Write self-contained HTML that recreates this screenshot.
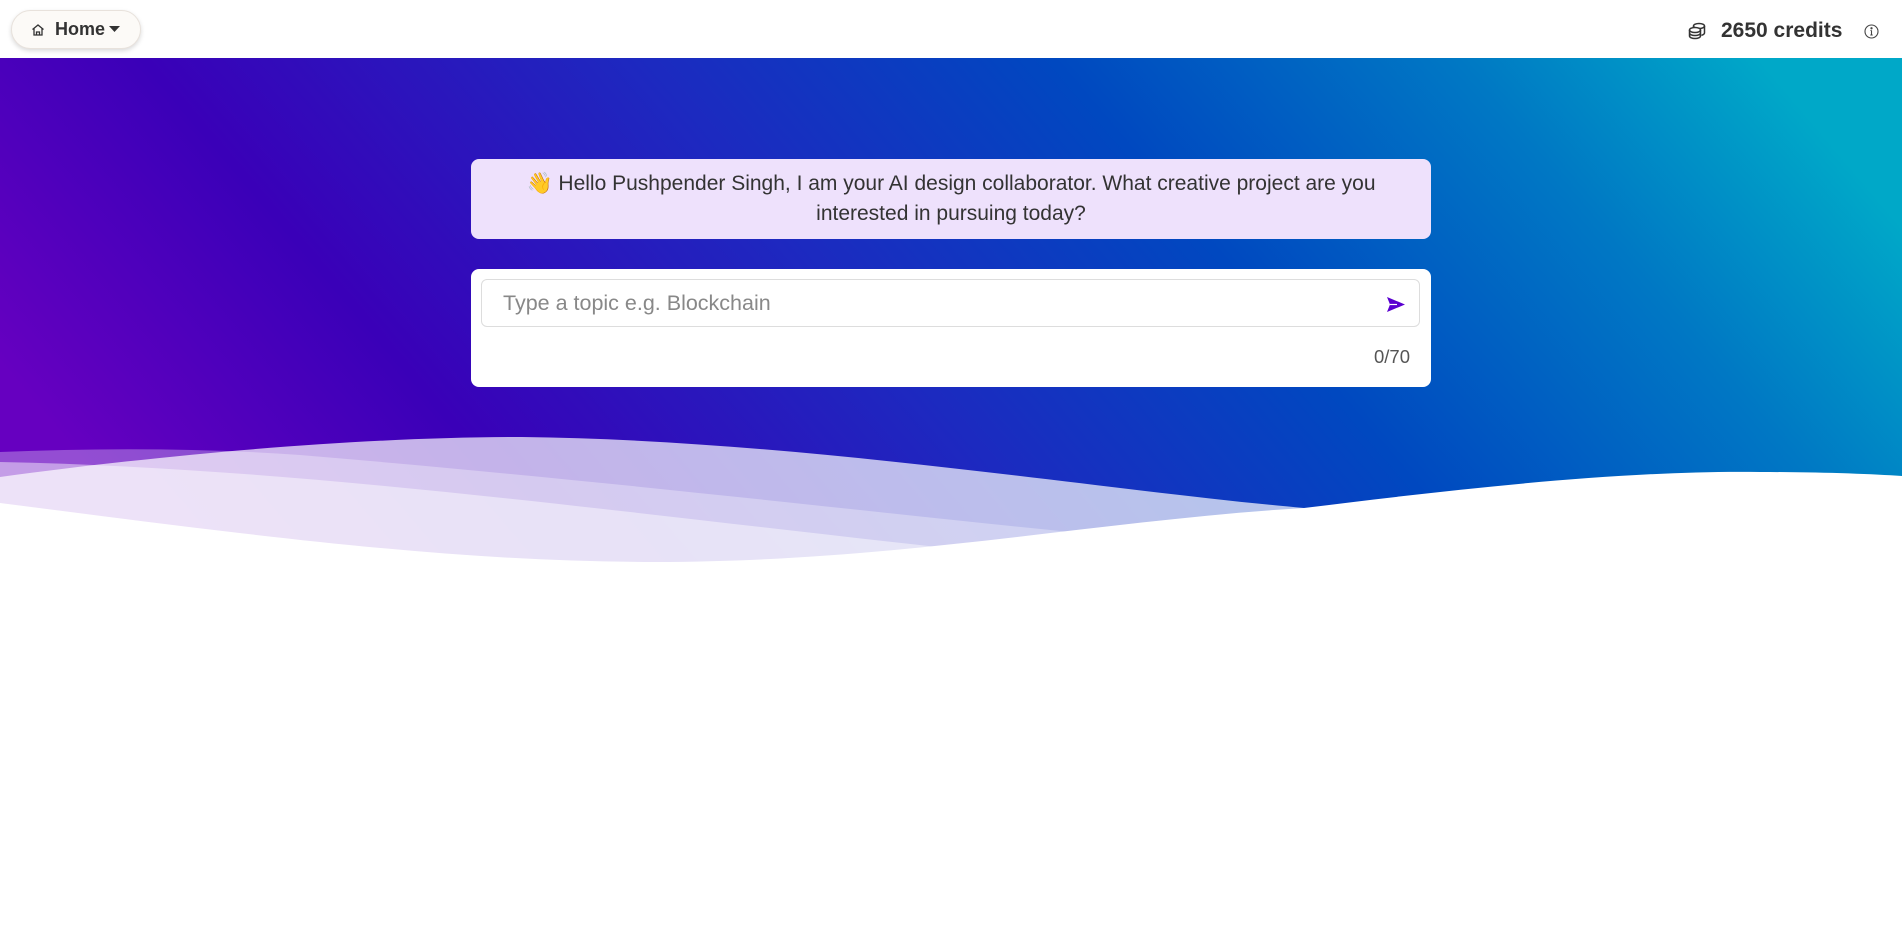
<!DOCTYPE html>
<html><head><meta charset="utf-8"><style>
*{margin:0;padding:0;box-sizing:border-box}
body{width:1902px;height:928px;background:#fff;font-family:"Liberation Sans",sans-serif;position:relative;overflow:hidden;color:#333}
.hdr{position:absolute;left:0;top:0;width:1902px;height:58px;background:#fff}
.home{position:absolute;left:11px;top:10px;width:130px;height:39px;border-radius:20px;background:#fcfaf7;border:1px solid #e8e2dc;box-shadow:0 2px 5px rgba(0,0,0,.15);display:flex;align-items:center;padding-left:19px;font-weight:bold;font-size:18px;color:#333}
.home svg{margin-right:10px}
.cred{position:absolute;left:1687px;top:19px;display:flex;align-items:center;font-size:21px;font-weight:bold;color:#333}
svg.bg{position:absolute;left:0;top:58px}
.msg{position:absolute;left:471px;top:159px;width:960px;height:80px;background:#eee1fc;border-radius:8px;text-align:center;font-size:21px;line-height:30px;padding-top:10px;color:#333;white-space:nowrap}
.card{position:absolute;left:471px;top:269px;width:960px;height:118px;background:#fff;border-radius:8px}
.inp{position:absolute;left:10px;top:10px;width:939px;height:48px;border:1px solid #ddd;border-radius:6px;font-size:21.5px;color:#888;padding:11px 0 0 21px}
.cnt{position:absolute;right:21px;top:77px;font-size:18.5px;color:#555}
</style></head><body>
<div class="hdr">
<div class="home"><svg width="14" height="14" viewBox="0 0 14 14" fill="none" stroke="#333" stroke-width="1.3"><path d="M1.5 6.5L7 2l5.5 4.5M3 5.5V12h8V5.5M5.5 12V9h3v3"/></svg>Home<svg width="11" height="7" viewBox="0 0 11 7" style="margin-left:4px"><path d="M0 0h11L5.5 6z" fill="#333"/></svg></div>
<div class="cred"><svg width="20" height="18" viewBox="0 0 20 18" fill="none" stroke="#333" stroke-width="1.5"><ellipse cx="12" cy="4" rx="5.5" ry="2.5"/><path d="M6.5 4v3M17.5 4v7c0 1-1.5 2-3 2.3"/><ellipse cx="8" cy="8" rx="5.5" ry="2.5" fill="#fff"/><path d="M2.5 8v6c0 1.4 2.5 2.5 5.5 2.5s5.5-1.1 5.5-2.5V8M2.5 11c0 1.4 2.5 2.5 5.5 2.5s5.5-1.1 5.5-2.5"/></svg><span style="margin-left:14px">2650 credits</span><svg style="margin-left:22px" width="15" height="15" viewBox="0 0 15 15" fill="none" stroke="#444" stroke-width="1.1"><circle cx="7.5" cy="7.5" r="6.5"/><path d="M7.5 6.5v4.5M6.3 11h2.4M6.5 6.5h1"/><circle cx="7.5" cy="4.3" r=".6" fill="#444"/></svg></div>
</div>
<svg class="bg" width="1902" height="560" viewBox="0 58 1902 560">
<defs><linearGradient id="g" x1="0" y1="0.55" x2="1" y2="0.3"><stop offset="0" stop-color="#6600c0"/><stop offset="0.2" stop-color="#3a00b8"/><stop offset="0.45" stop-color="#1c2ac0"/><stop offset="0.65" stop-color="#0048c0"/><stop offset="0.85" stop-color="#0078c4"/><stop offset="1" stop-color="#00a8c8"/></linearGradient></defs>
<rect x="0" y="58" width="1902" height="560" fill="url(#g)"/>
<path d="M0,452 C100,448 200,448 300,455 C600,480 850,510 1080,533 L1902,620 L0,620Z" fill="#fff" opacity="0.3"/>
<path d="M0,477 C200,450 380,437 522,437 C800,440 1100,490 1304,508 L1902,620 L0,620Z" fill="#fff" opacity="0.7"/>
<path d="M0,462 C300,468 600,510 946,548 L1902,640 L0,640Z" fill="#fff" opacity="0.45"/>
<path d="M0,503 C250,535 450,562 655,562 C900,562 1100,520 1304,508 C1450,490 1620,470 1760,472 C1820,472 1870,474 1902,476 L1902,640 L0,640Z" fill="#fff"/>
</svg>
<div class="msg">👋 Hello Pushpender Singh, I am your AI design collaborator. What creative project are you<br>interested in pursuing today?</div>
<div class="card"><div class="inp">Type a topic e.g. Blockchain</div>
<svg style="position:absolute;left:916px;top:28px" width="18" height="15" viewBox="0 0 18 15"><path d="M0 0L18 7.5L0 15L3 7.5Z" fill="#5a00d0"/><path d="M3 7.5H10" stroke="#fff" stroke-width="1.2"/></svg>
<div class="cnt">0/70</div></div>
</body></html>
